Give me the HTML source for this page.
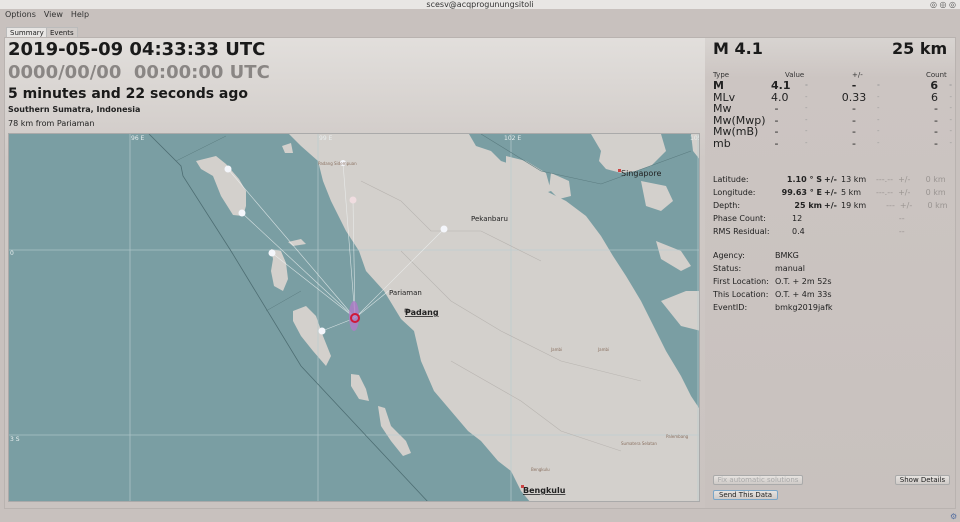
<!DOCTYPE html>
<html><head><meta charset="utf-8">
<style>
*{margin:0;padding:0;box-sizing:border-box}
body{width:960px;height:522px;overflow:hidden;background:#c8c1be;font-family:"DejaVu Sans","Liberation Sans",sans-serif;color:#222;position:relative}
.abs{position:absolute;white-space:nowrap}
.title{top:0;left:0;width:960px;height:9px;background:#e8e6e4;font-size:8px;text-align:center;line-height:9px;color:#333}
.menu{top:10px;left:5px;font-size:8px;color:#333}
.menu span{margin-right:8px}
.frame{left:4px;top:37px;width:952px;height:472px;border:1px solid #b9b3b0;background:linear-gradient(#e2dfdc,#cfc9c6 120px,#cac3c0)}
.tab{font-size:7px;top:27px;height:10px;line-height:10px;padding:0 3px;border:1px solid #bbb;border-bottom:none}
.map{left:8px;top:133px;width:692px;height:369px;background:#7a9ea3;overflow:hidden;border:1px solid #aaa}
.rp td{padding:0}
.btn{font-size:7px;height:10px;line-height:9px;border:1px solid #aaa;border-radius:2px;background:linear-gradient(#e6e3e0,#cfcac7);text-align:center}
</style></head><body>
<div class="abs title">scesv@acqprogunungsitoli</div>
<div class="abs" style="right:4px;top:0;font-size:8px;color:#555">◎ ◎ ◎</div>
<div class="abs menu"><span>Options</span><span>View</span><span>Help</span></div>
<div class="abs frame"></div>
<div class="abs tab" style="left:6px;background:#e8e6e4">Summary</div>
<div class="abs tab" style="left:46px;background:#cfcac7">Events</div>

<div class="abs" style="left:8px;top:39px;font-size:18px;font-weight:bold;color:#1a1a1a">2019-05-09 04:33:33 UTC</div>
<div class="abs" style="left:8px;top:62px;font-size:18px;font-weight:bold;color:#8a8684">0000/00/00&nbsp; 00:00:00 UTC</div>
<div class="abs" style="left:8px;top:86px;font-size:14px;font-weight:bold;color:#1a1a1a">5 minutes and 22 seconds ago</div>
<div class="abs" style="left:8px;top:105px;font-size:8px;font-weight:bold">Southern Sumatra, Indonesia</div>
<div class="abs" style="left:8px;top:119px;font-size:8px">78 km from Pariaman</div>

<div class="abs map">
<svg width="692" height="369" viewBox="8 133 692 369" xmlns="http://www.w3.org/2000/svg" style="display:block">
<rect x="8" y="133" width="692" height="369" fill="#7a9ea3"/>
<path d="M288,133 L700,133 L700,502 L530,502 L520,490 L510,470 L497,460 L480,440 L467,430 L450,410 L433,390 L420,360 L413,330 L400,318 L383,290 L365,270 L358,250 L345,230 L330,200 L322,180 L317,160 L300,145 Z" fill="#d3d0cc"/>
<path d="M468,133 L700,133 L700,410 L690,395 L680,375 L665,350 L655,330 L640,300 L625,275 L612,255 L600,235 L585,215 L565,200 L545,190 L540,180 L520,175 L515,165 L500,160 L490,150 L475,145 Z" fill="#7a9ea3"/>
<path d="M590,133 L660,133 L665,150 L650,165 L635,170 L620,172 L605,168 L598,160 L600,150 Z" fill="#d3d0cc"/>
<path d="M505,155 L525,160 L545,172 L550,190 L535,195 L520,185 L505,170 Z" fill="#d3d0cc"/>
<path d="M550,172 L568,180 L570,195 L558,198 L548,188 Z" fill="#d3d0cc"/>
<path d="M640,180 L665,185 L672,200 L660,210 L645,205 Z" fill="#d3d0cc"/>
<path d="M655,240 L680,250 L690,265 L680,270 L660,258 Z" fill="#d3d0cc"/>
<path d="M660,300 L685,290 L700,290 L700,330 L680,325 Z" fill="#d3d0cc"/>
<path d="M690,133 L700,133 L700,160 L692,150 Z" fill="#d3d0cc"/>
<path d="M195,160 L215,155 L225,163 L238,178 L245,190 L245,205 L242,215 L232,214 L220,195 L212,175 L200,168 Z" fill="#d3d0cc"/>
<path d="M270,248 L280,250 L285,262 L287,278 L282,290 L273,285 L270,270 L272,258 Z" fill="#d3d0cc"/>
<path d="M287,241 L300,238 L305,243 L292,245 Z" fill="#d3d0cc"/>
<path d="M292,310 L305,305 L315,315 L322,335 L330,355 L325,365 L312,350 L300,335 L292,320 Z" fill="#d3d0cc"/>
<path d="M350,373 L358,374 L365,388 L368,400 L358,398 L350,385 Z" fill="#d3d0cc"/>
<path d="M377,405 L384,407 L390,425 L405,440 L410,452 L402,455 L390,440 L380,425 Z" fill="#d3d0cc"/>
<path d="M281,145 L290,142 L292,152 L284,152 Z" fill="#d3d0cc"/>
<g stroke="#b9cdd0" stroke-width="0.8" opacity="0.8">
<line x1="129" y1="133" x2="129" y2="502"/><line x1="317" y1="133" x2="317" y2="502"/><line x1="510" y1="133" x2="510" y2="502"/><line x1="697" y1="133" x2="697" y2="502"/>
<line x1="8" y1="249" x2="700" y2="249"/><line x1="8" y1="434" x2="700" y2="434"/>
</g>
<g fill="#e8eeee" font-size="6" font-family="DejaVu Sans"><text x="130" y="139">96 E</text><text x="318" y="139">99 E</text><text x="503" y="139">102 E</text><text x="689" y="139">105</text><text x="9" y="254">0</text><text x="9" y="440">3 S</text></g>
<path d="M148,133 L180,165 L182,175 L230,250 L300,365 L370,440 L428,502" stroke="#4e6e73" stroke-width="0.8" fill="none"/>
<path d="M175,160 L225,135" stroke="#5b7c80" stroke-width="0.5" fill="none"/>
<path d="M265,310 L300,290" stroke="#5b7c80" stroke-width="0.5" fill="none"/>
<path d="M480,133 L540,170 L600,183 L690,150" stroke="#5b7c80" stroke-width="0.6" fill="none"/>
<g stroke="#b8b4b0" stroke-width="0.6" fill="none">
<path d="M360,180 L400,200 L430,230 L480,230 L540,260"/><path d="M400,250 L450,300 L500,330 L560,360 L640,380"/><path d="M450,360 L520,400 L560,430 L620,450"/>
</g>
<g stroke="#eef2f2" stroke-width="0.6" opacity="0.8">
<line x1="354" y1="317" x2="227" y2="168"/><line x1="354" y1="317" x2="241" y2="212"/><line x1="354" y1="317" x2="271" y2="252"/><line x1="354" y1="317" x2="321" y2="330"/><line x1="354" y1="317" x2="342" y2="162"/><line x1="354" y1="317" x2="352" y2="199"/><line x1="354" y1="317" x2="443" y2="228"/><line x1="354" y1="317" x2="390" y2="288"/>
</g>
<g fill="#f4f6fb"><circle cx="227" cy="168" r="3.5"/><circle cx="241" cy="212" r="3.5"/><circle cx="271" cy="252" r="3.5"/><circle cx="321" cy="330" r="3.5"/><circle cx="342" cy="162" r="3"/><circle cx="352" cy="199" r="3.5" fill="#f0dde0"/><circle cx="443" cy="228" r="3.5"/></g>
<ellipse cx="353" cy="315" rx="5" ry="15" fill="#b07ac8" opacity="0.8"/>
<circle cx="354" cy="317" r="4" fill="none" stroke="#d01838" stroke-width="2"/>
<g font-family="DejaVu Sans" fill="#222"><text x="388" y="294" font-size="7">Pariaman</text><text x="404" y="314" font-size="8" font-weight="bold" text-decoration="underline">Padang</text><text x="470" y="220" font-size="7">Pekanbaru</text><text x="620" y="175" font-size="8">Singapore</text><text x="522" y="492" font-size="8" font-weight="bold" text-decoration="underline">Bengkulu</text></g>
<g font-family="DejaVu Sans" fill="#8a7060" font-size="4"><text x="317" y="164">Padang Sidempuan</text><text x="550" y="350">Jambi</text><text x="597" y="350">Jambi</text><text x="530" y="470">Bengkulu</text><text x="620" y="444">Sumatera Selatan</text><text x="665" y="437">Palembang</text></g>
<rect x="404" y="308" width="3" height="3" fill="none" stroke="#222" stroke-width="0.6"/>
<rect x="520" y="484" width="3" height="3" fill="#c44"/>
<rect x="617" y="168" width="3" height="3" fill="#c44"/>
</svg>
</div>

<div class="abs" style="left:705px;top:38px;width:250px;height:470px;background:linear-gradient(#d8d4d1,#ccc5c2 40px,#c8c1be)"></div>
<div class="abs" style="left:713px;top:39px;font-size:16px;font-weight:bold;color:#1a1a1a">M 4.1</div>
<div class="abs" style="left:892px;top:39px;font-size:16px;font-weight:bold;color:#1a1a1a">25 km</div>

<div class="abs" style="left:713px;top:71px;font-size:7px;color:#333">Type</div>
<div class="abs" style="left:785px;top:71px;font-size:7px;color:#333">Value</div>
<div class="abs" style="left:852px;top:71px;font-size:7px;color:#333">+/-</div>
<div class="abs" style="left:926px;top:71px;font-size:7px;color:#333">Count</div>
<table class="abs rp" style="left:713px;top:80px;font-size:11px;line-height:11.5px;border-collapse:collapse;color:#222">
<tr style="font-weight:bold"><td style="width:58px">M</td><td style="width:34px">4.1</td><td style="width:26px;color:#999;font-size:7px">-</td><td style="width:46px;text-align:center">-</td><td style="width:33px;color:#999;font-size:7px">-</td><td style="width:28px;text-align:right">6</td><td style="width:14px;text-align:right;color:#999;font-size:7px">-</td></tr>
<tr><td>MLv</td><td>4.0</td><td style="color:#999;font-size:7px">-</td><td style="text-align:center">0.33</td><td style="color:#999;font-size:7px">-</td><td style="text-align:right">6</td><td style="text-align:right;color:#999;font-size:7px">-</td></tr>
<tr><td>Mw</td><td>&nbsp;-</td><td style="color:#999;font-size:7px">-</td><td style="text-align:center">-</td><td style="color:#999;font-size:7px">-</td><td style="text-align:right">-</td><td style="text-align:right;color:#999;font-size:7px">-</td></tr>
<tr><td>Mw(Mwp)</td><td>&nbsp;-</td><td style="color:#999;font-size:7px">-</td><td style="text-align:center">-</td><td style="color:#999;font-size:7px">-</td><td style="text-align:right">-</td><td style="text-align:right;color:#999;font-size:7px">-</td></tr>
<tr><td>Mw(mB)</td><td>&nbsp;-</td><td style="color:#999;font-size:7px">-</td><td style="text-align:center">-</td><td style="color:#999;font-size:7px">-</td><td style="text-align:right">-</td><td style="text-align:right;color:#999;font-size:7px">-</td></tr>
<tr><td>mb</td><td>&nbsp;-</td><td style="color:#999;font-size:7px">-</td><td style="text-align:center">-</td><td style="color:#999;font-size:7px">-</td><td style="text-align:right">-</td><td style="text-align:right;color:#999;font-size:7px">-</td></tr>
</table>

<div class="abs" style="left:713px;top:173px;font-size:8px;line-height:13px;color:#222">Latitude:<br>Longitude:<br>Depth:<br>Phase Count:<br>RMS Residual:</div>
<div class="abs" style="left:770px;top:173px;width:52px;font-size:8px;line-height:13px;font-weight:bold;text-align:right">1.10 ° S<br>99.63 ° E<br>25 km</div>
<div class="abs" style="left:824px;top:173px;font-size:8px;line-height:13px;font-weight:bold">+/-<br>+/-<br>+/-</div>
<div class="abs" style="left:841px;top:173px;font-size:8px;line-height:13px">13 km<br>5 km<br>19 km</div>
<div class="abs" style="left:792px;top:212px;font-size:8px;line-height:13px">12<br>0.4</div>
<div class="abs" style="left:876px;top:173px;font-size:8px;line-height:13px;color:#9a9592">---.-- &nbsp;+/- &nbsp; &nbsp; &nbsp;0 km<br>---.-- &nbsp;+/- &nbsp; &nbsp; &nbsp;0 km<br>&nbsp; &nbsp; --- &nbsp;+/- &nbsp; &nbsp; &nbsp;0 km<br>&nbsp; &nbsp; &nbsp; &nbsp; &nbsp;--<br>&nbsp; &nbsp; &nbsp; &nbsp; &nbsp;--</div>

<div class="abs" style="left:713px;top:249px;font-size:8px;line-height:13px">Agency:<br>Status:<br>First Location:<br>This Location:<br>EventID:</div>
<div class="abs" style="left:775px;top:249px;font-size:8px;line-height:13px">BMKG<br>manual<br>O.T. + 2m 52s<br>O.T. + 4m 33s<br>bmkg2019jafk</div>

<div class="abs btn" style="left:713px;top:475px;width:90px;color:#aaa">Fix automatic solutions</div>
<div class="abs btn" style="left:895px;top:475px;width:55px">Show Details</div>
<div class="abs btn" style="left:713px;top:490px;width:65px;border-color:#7aa6c8">Send This Data</div>
<div class="abs" style="left:950px;top:512px;font-size:8px;color:#5670a0">⚙</div>
</body></html>
